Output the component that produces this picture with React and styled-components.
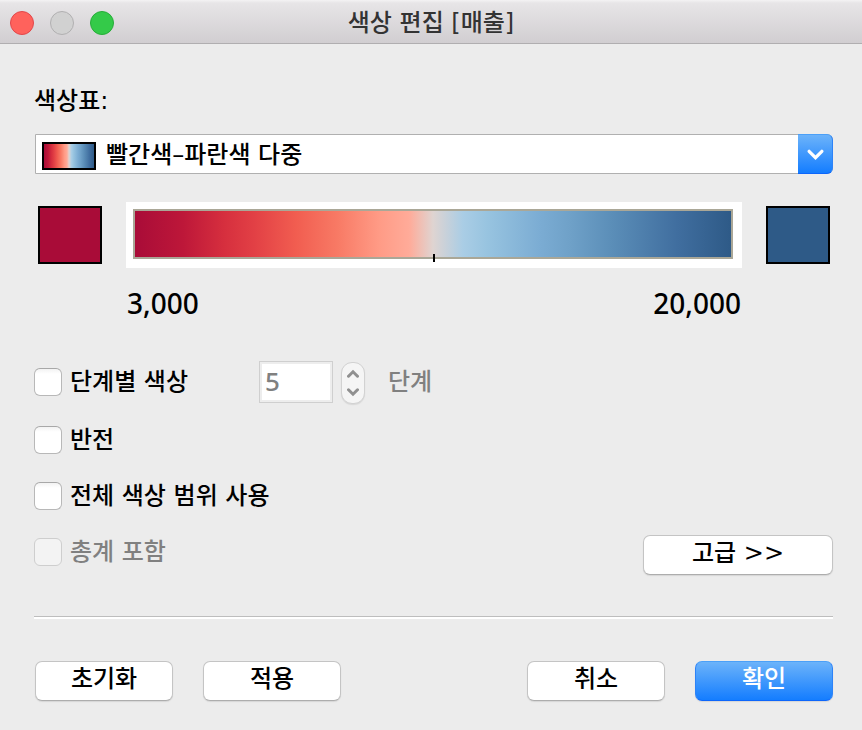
import React, { useState } from "react";
import styled, { createGlobalStyle, css } from "styled-components";

const GlobalStyle = createGlobalStyle`
  *, *::before, *::after { box-sizing: border-box; }
  body {
    margin: 0;
    background: #ececec;
    color: #000;
    font: 500 24px/32px "DejaVu Sans", "Noto Sans CJK KR", sans-serif;
  }
  button, input, select { font: inherit; color: inherit; margin: 0; }
`;

const palette = `linear-gradient(to right,
  #a90c38 0%, #bd1739 8%, #d62f3e 15%, #e24045 20%, #f15d50 27%,
  #f87a65 34%, #ff9b86 41%, #ffab99 46%, #dfd4d1 50%, #aacde5 55%,
  #98c4e0 59%, #7bacd3 68%, #6fa1c8 73%, #5b8eb8 80%, #406e9f 91%,
  #2e5a87 100%)`;

const TitleBar = styled.header`
  display: grid;
  grid-template-columns: 1fr auto 1fr;
  align-items: center;
  height: 44px;
  padding: 2px 10px 0;
  background: linear-gradient(#f4f3f4 0, #e7e5e7 3px, #d1ced1 100%);
  border-bottom: 1px solid #b0aeb0;
`;

const WindowControls = styled.div`
  display: flex;
  gap: 16px;
`;

const WindowControl = styled.button`
  width: 24px;
  height: 24px;
  padding: 0;
  border: 1px solid ${(p) => p.$edge};
  border-radius: 50%;
  background: ${(p) => p.$fill};
`;

const Title = styled.h1`
  margin: 0;
  color: #333;
  font-size: 24px;
  font-weight: 500;
`;

const Content = styled.main`
  padding: 41px 29px 28px 34px;
`;

const FieldLabel = styled.label`
  display: block;
  margin-bottom: 17px;
`;

const ComboBox = styled.div`
  position: relative;
  height: 40px;
  margin-left: 1px;
`;

const PaletteSelect = styled.select`
  appearance: none;
  width: 100%;
  height: 100%;
  padding: 2px 40px 0 70px;
  border: 1px solid #b0b0b0;
  border-radius: 0 6px 6px 0;
  background: #fff;
`;

const PalettePreview = styled.span`
  position: absolute;
  left: 7px;
  top: 8px;
  width: 54px;
  height: 28px;
  border: 2px solid #000;
  background: ${palette} content-box;
  pointer-events: none;
`;

const ComboArrow = styled.span`
  position: absolute;
  right: 0;
  top: 0;
  display: grid;
  place-items: center;
  width: 35px;
  height: 40px;
  border: 1px solid;
  border-color: #4ba0f8 #2d83f8 #0d66fb;
  border-left: 0;
  border-radius: 0 6px 6px 0;
  background: linear-gradient(#6cb3fa, #147dff);
  pointer-events: none;
`;

const RampRow = styled.div`
  display: grid;
  grid-template-columns: 64px 1fr 64px;
  column-gap: 24px;
  align-items: center;
  margin: 28px 3px 0 4px;
`;

const Swatch = styled.button`
  height: 58px;
  padding: 0;
  border: 2px solid #000;
  background: ${(p) => p.$color};
`;

const RampFrame = styled.div`
  height: 66px;
  padding: 7px 9px 9px 7px;
  background: #fff;
`;

const Ramp = styled.div`
  position: relative;
  height: 50px;
  border: 2px solid #aaa797;
  background: ${palette} padding-box;
`;

const CenterMark = styled.span`
  position: absolute;
  left: 50%;
  bottom: -5px;
  width: 2px;
  height: 8px;
  background: #000;
`;

const RangeLabels = styled.div`
  grid-column: 2;
  display: flex;
  justify-content: space-between;
  margin-top: 19px;
  padding: 0 1px;
  font: 500 28px/32px "Noto Sans", sans-serif;
`;

const Options = styled.div`
  display: grid;
  row-gap: 28px;
  margin-top: 42px;
`;

const SteppedRow = styled.div`
  display: flex;
  align-items: center;
  height: 42px;
  margin-bottom: -5px;
`;

const CheckLabel = styled.label`
  display: flex;
  align-items: center;
  gap: 8px;
  height: 28px;
  line-height: 28px;
  color: ${(p) => (p.$disabled ? "#808080" : "#000")};
`;

const CheckBox = styled.input.attrs({ type: "checkbox" })`
  appearance: none;
  flex: none;
  width: 28px;
  height: 28px;
  border: 1px solid #b8b8b8;
  border-top-color: #a8a8a8;
  border-radius: 6px;
  background: linear-gradient(#f3f3f3, #fff 5px);
  &:checked { background: #147dff; }
  &:disabled {
    border-color: #cecece;
    background: #f3f3f3;
  }
`;

const SteppedLabel = styled(CheckLabel)`
  width: 225px;
`;

const StepInput = styled.input`
  width: 74px;
  height: 42px;
  padding: 0 5px 2px;
  border: 1px solid #cfcfcf;
  background: #fff;
  box-shadow: inset 0 0 0 2px #ededed;
  color: #808080;
  font: 500 26px/36px "Noto Sans", sans-serif;
`;

const Stepper = styled.div`
  display: grid;
  grid-template-rows: 1fr 1fr;
  width: 24px;
  height: 42px;
  margin: 2px 23px 0 8px;
  padding: 2px 0;
  border: 1px solid #d2d2d2;
  border-radius: 11px;
  background: #f5f5f5;
  box-shadow: 0 1px 1px #d8d8d8;
`;

const StepButton = styled.button`
  display: grid;
  place-items: center;
  padding: 0;
  border: 0;
  background: transparent;
`;

const StepUnit = styled.span`
  color: #808080;
`;

const LastRow = styled.div`
  display: flex;
  justify-content: space-between;
  align-items: flex-start;
  margin-top: -3px;
`;

const TotalsLabel = styled(CheckLabel)`
  margin-top: 3px;
`;

const PushButton = styled.button`
  width: ${(p) => (p.$wide ? 190 : 138)}px;
  height: 40px;
  padding: 0 0 4px;
  border: 1px solid #c4c4c4;
  border-bottom-color: #adadad;
  border-radius: 7px;
  background: #fff;
  box-shadow: 0 1px 1px #d6d6d6;
  line-height: 32px;
  ${(p) =>
    p.$primary &&
    css`
      border-color: #4ba0f8 #2d83f8 #0d66fb;
      background: linear-gradient(#6cb3fa, #147dff);
      color: #fff;
    `}
`;

const Divider = styled.hr`
  height: 3px;
  margin: 41px 0 0;
  border: 0;
  border-top: 1px solid #bdbdbd;
  background: #fff;
`;

const Footer = styled.footer`
  display: flex;
  justify-content: space-between;
  margin: 42px 0 0 1px;
`;

const ButtonGroup = styled.div`
  display: flex;
  gap: 30px;
`;

function Chevron({ up, size, color, stroke }) {
  return (
    <svg width={size} height={size} viewBox="0 0 16 16" fill="none" aria-hidden="true">
      <path
        d={up ? "M2 11l6-6 6 6" : "M2 5l6 6 6-6"}
        stroke={color}
        strokeWidth={stroke}
        strokeLinecap="round"
      />
    </svg>
  );
}

export default function App() {
  const [name, setName] = useState("빨간색–파란색 다중");
  return (
    <>
      <GlobalStyle />
      <TitleBar>
        <WindowControls>
          <WindowControl $fill="#ff625c" $edge="#e2474a" aria-label="닫기" />
          <WindowControl $fill="#d1d1d1" $edge="#b1b0b1" aria-label="최소화" disabled />
          <WindowControl $fill="#34ca49" $edge="#27ad39" aria-label="확대" />
        </WindowControls>
        <Title>색상 편집 [매출]</Title>
      </TitleBar>
      <Content>
        <FieldLabel htmlFor="palette">색상표:</FieldLabel>
        <ComboBox>
          <PaletteSelect id="palette" value={name} onChange={(e) => setName(e.target.value)}>
            <option>빨간색–파란색 다중</option>
          </PaletteSelect>
          <PalettePreview />
          <ComboArrow>
            <Chevron size={17} color="#fff" stroke={3} />
          </ComboArrow>
        </ComboBox>
        <RampRow>
          <Swatch $color="#a90c38" aria-label="시작 색상" />
          <RampFrame>
            <Ramp>
              <CenterMark />
            </Ramp>
          </RampFrame>
          <Swatch $color="#2e5a87" aria-label="끝 색상" />
          <RangeLabels>
            <span>3,000</span>
            <span>20,000</span>
          </RangeLabels>
        </RampRow>
        <Options>
          <SteppedRow>
            <SteppedLabel>
              <CheckBox />
              단계별 색상
            </SteppedLabel>
            <StepInput id="steps" defaultValue="5" disabled />
            <Stepper>
              <StepButton disabled aria-label="증가">
                <Chevron up size={12} color="#909090" stroke={4} />
              </StepButton>
              <StepButton disabled aria-label="감소">
                <Chevron size={12} color="#909090" stroke={4} />
              </StepButton>
            </Stepper>
            <StepUnit as="label" htmlFor="steps">단계</StepUnit>
          </SteppedRow>
          <CheckLabel>
            <CheckBox />
            반전
          </CheckLabel>
          <CheckLabel>
            <CheckBox />
            전체 색상 범위 사용
          </CheckLabel>
          <LastRow>
            <TotalsLabel $disabled>
              <CheckBox disabled />
              총계 포함
            </TotalsLabel>
            <PushButton $wide>고급 &gt;&gt;</PushButton>
          </LastRow>
        </Options>
        <Divider />
        <Footer>
          <ButtonGroup>
            <PushButton>초기화</PushButton>
            <PushButton>적용</PushButton>
          </ButtonGroup>
          <ButtonGroup>
            <PushButton>취소</PushButton>
            <PushButton $primary>확인</PushButton>
          </ButtonGroup>
        </Footer>
      </Content>
    </>
  );
}
